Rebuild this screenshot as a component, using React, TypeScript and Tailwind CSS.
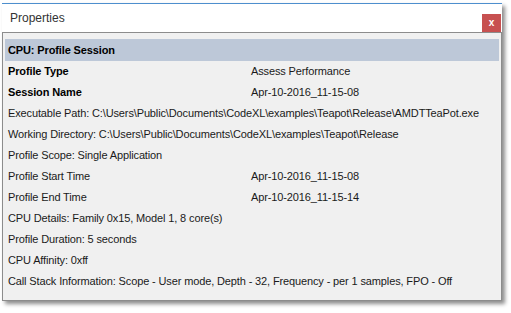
const rows: { label: string; value?: string; bold?: boolean }[] = [
  { label: 'Profile Type', value: 'Assess Performance', bold: true },
  { label: 'Session Name', value: 'Apr-10-2016_11-15-08', bold: true },
  { label: 'Executable Path: C:\\Users\\Public\\Documents\\CodeXL\\examples\\Teapot\\Release\\AMDTTeaPot.exe' },
  { label: 'Working Directory: C:\\Users\\Public\\Documents\\CodeXL\\examples\\Teapot\\Release' },
  { label: 'Profile Scope: Single Application' },
  { label: 'Profile Start Time', value: 'Apr-10-2016_11-15-08' },
  { label: 'Profile End Time', value: 'Apr-10-2016_11-15-14' },
  { label: 'CPU Details: Family 0x15, Model 1, 8 core(s)' },
  { label: 'Profile Duration: 5 seconds' },
  { label: 'CPU Affinity: 0xff' },
  { label: 'Call Stack Information: Scope - User mode, Depth - 32, Frequency - per 1 samples, FPO - Off' },
];

export default function App() {
  return (
    <div className="w-[511px] h-[313px] bg-white pl-[2px] pt-[3px] font-['Liberation_Sans',Arial,sans-serif]">
      <div className="w-[500px] h-[298px] flex flex-col shadow-[3px_3px_4px_rgba(0,0,0,0.45)]">
        {/* title bar */}
        <div className="h-[29px] bg-white border-t-[1.5px] border-[#4d8fce] flex items-center justify-between pl-[8px] pr-[1px]">
          <span className="text-[12px] text-[#333] leading-none">Properties</span>
          <div className="w-[19px] h-[18px] mt-[9px] bg-[#c75050] flex items-center justify-center text-white text-[10px] font-bold leading-none">
            x
          </div>
        </div>

        {/* panel */}
        <div className="flex-1 bg-[#f0f0f0] border border-[#8c8c8c] px-[2px] pt-[6px] text-[11px] tracking-[-0.13px] text-[#1a1a1a]">
          <div className="h-[22px] bg-[#bdc8d8] flex items-center pl-[3px] font-bold text-black">
            CPU: Profile Session
          </div>
          {rows.map((r, i) => (
            <div key={i} className="h-[21px] flex items-center pl-[3px] whitespace-nowrap">
              <span className={r.bold ? 'w-[243px] font-bold text-black' : 'w-[243px]'}>{r.label}</span>
              {r.value && <span>{r.value}</span>}
            </div>
          ))}
        </div>
      </div>
    </div>
  );
}
